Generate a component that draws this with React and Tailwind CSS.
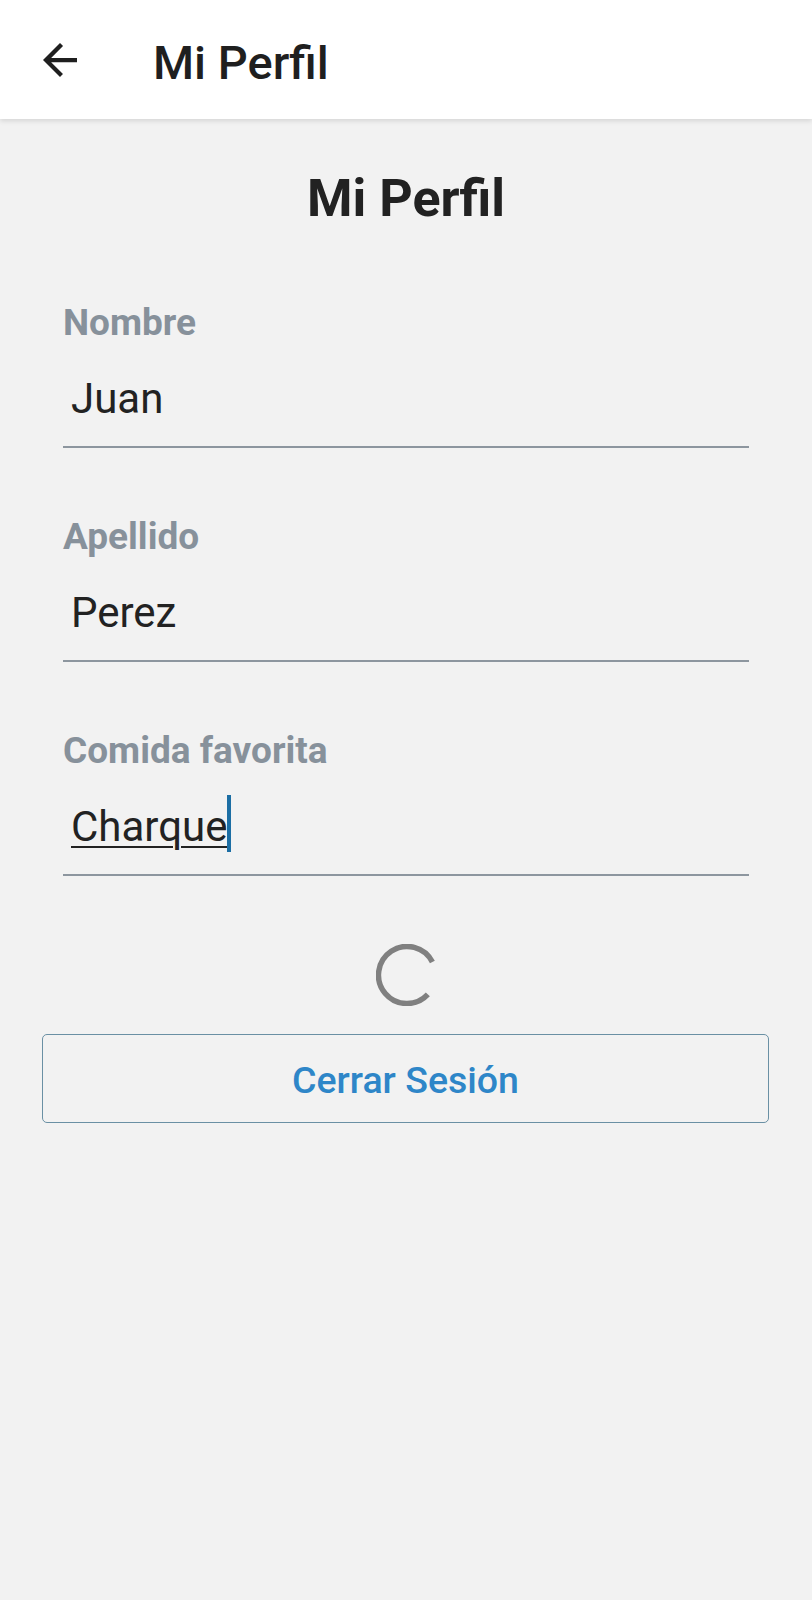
import React from "react";

const FIELDS = [
  { label: "Nombre", value: "Juan" },
  { label: "Apellido", value: "Perez" },
  { label: "Comida favorita", value: "Charque", editing: true },
];

function BackArrow() {
  return (
    <svg width="34" height="34" viewBox="4 4 16 16" className="block">
      <path
        fill="#1f1f1f"
        d="M20 11H7.83l5.59-5.59L12 4l-8 8 8 8 1.41-1.41L7.83 13H20v-2z"
      />
    </svg>
  );
}

function Spinner() {
  // open ring, gap on the right side
  return (
    <svg width="62" height="62" viewBox="0 0 62 62" className="block">
      <path
        d="M51.84 50.44 A28.5 28.5 0 1 1 56.39 18.06"
        fill="none"
        stroke="#808080"
        strokeWidth="5.5"
      />
    </svg>
  );
}

function Field({ label, value, editing }) {
  return (
    <div className="flex flex-col">
      <div className="h-[37px] text-[37px] leading-none font-bold text-[#87919b]">
        {label}
      </div>
      <div className="mt-[37px] h-[42px] pl-[8px] text-[42px] leading-none text-[#222222]">
        {editing ? (
          <span className="relative underline decoration-[2px] underline-offset-[5px] decoration-[#222222]">
            {value}
            <span className="absolute left-full top-[-7px] w-[4px] h-[57px] bg-[#1c6ea4]" />
          </span>
        ) : (
          value
        )}
      </div>
      <div className="mt-[26px] h-[2px] bg-[#8d969f]" />
    </div>
  );
}

export default function App() {
  return (
    <div
      className="flex flex-col h-[1600px] bg-[#f2f2f2]"
      style={{ fontFamily: "Roboto, 'Noto Sans', sans-serif" }}
    >
      {/* App bar */}
      <header className="relative z-10 flex items-start h-[119px] bg-white shadow-[0_2px_5px_rgba(0,0,0,0.12)]">
        <div className="ml-[43px] mt-[43px]">
          <BackArrow />
        </div>
        <h1 className="ml-[76px] mt-[39px] text-[47px] leading-none font-medium text-[#1f1f1f]">
          Mi Perfil
        </h1>
      </header>

      <main className="flex flex-col">
        <h2 className="mt-[54px] text-center text-[52px] leading-none font-bold text-[#222222]">
          Mi Perfil
        </h2>

        <div className="mt-[79px] px-[63px] flex flex-col gap-[70px]">
          {FIELDS.map((f) => (
            <Field key={f.label} {...f} />
          ))}
        </div>

        <div className="mt-[68px] flex justify-center pl-[2px]">
          <Spinner />
        </div>

        <div className="mt-[28px] pl-[42px] pr-[43px]">
          <button className="w-full h-[89px] rounded-[5px] border border-[#6a90a4] bg-[#f2f2f2] pt-[4px] text-[37.5px] leading-none font-medium text-[#2e86c8]">
            Cerrar Sesión
          </button>
        </div>
      </main>
    </div>
  );
}
